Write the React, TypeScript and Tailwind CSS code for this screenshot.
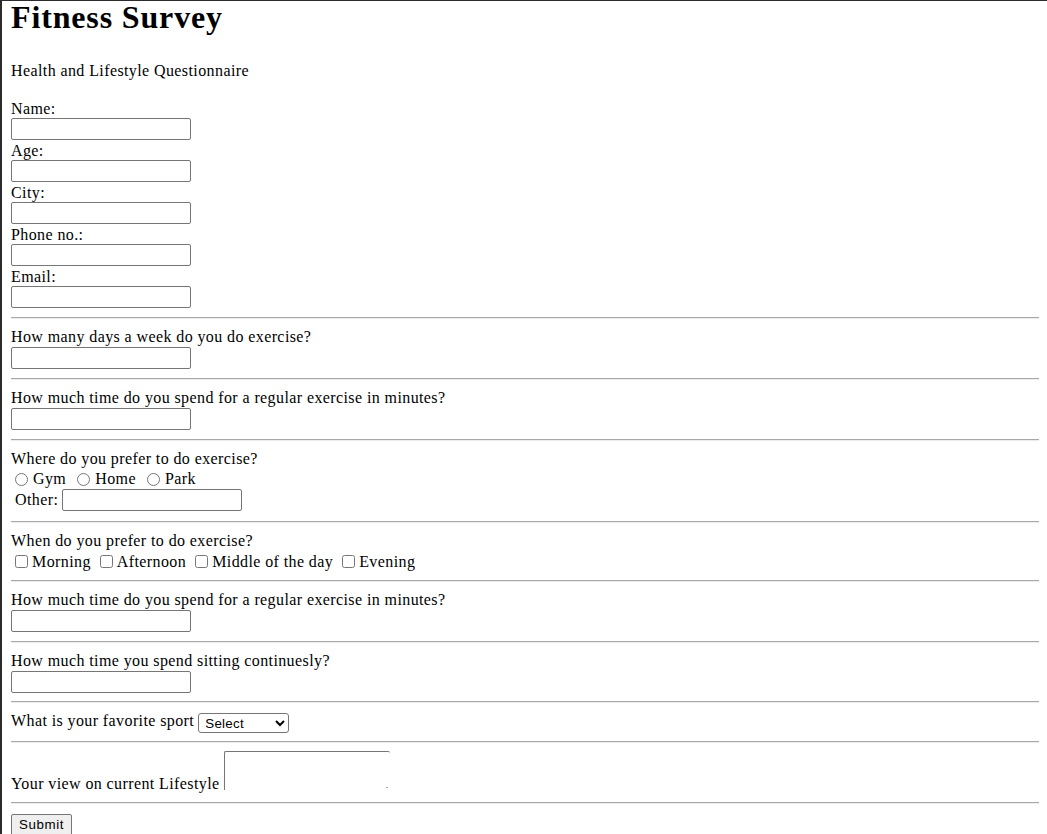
import React from "react";

const fields = ["Name:", "Age:", "City:", "Phone no.:", "Email:"];
const places = ["Gym", "Home", "Park"];
const times = ["Morning", "Afternoon", "Middle of the day", "Evening"];

const inputCls =
  "block w-[180px] h-[22px] border border-[#767676] rounded-[2px] bg-white px-[2px] text-[13.33px] font-['Liberation_Sans',Arial,sans-serif] outline-none";

// Chrome style inset horizontal rule
const Rule = () => (
  <div className="h-[2px] border-t border-b border-t-[#a8a8a8] border-b-[#ececec]" />
);

const Question = ({ text, gap }: { text: string; gap: string }) => (
  <div className={`pt-[8px] ${gap}`}>
    <div className="h-[20px] leading-[19px]">{text}</div>
    <input type="text" className={inputCls} />
  </div>
);

const App = () => {
  return (
    <div className="w-full h-[834px] overflow-hidden bg-white text-black border-t border-l-2 border-[#2b2b2b] pl-[9px] pr-[8px] font-['Liberation_Serif','Times_New_Roman',serif] text-[16px] tracking-[0.4px]">
      <h1 className="h-[33px] leading-[33px] text-[32px] font-bold tracking-[0.85px]">Fitness Survey</h1>
      <p className="mt-[27px] h-[20px] leading-[20px]">Health and Lifestyle Questionnaire</p>

      <form onSubmit={(e) => e.preventDefault()}>
        {/* Personal details */}
        <div className="mt-[18px] pb-[8px]">
          {fields.map((f) => (
            <div key={f} className="mb-[1px]">
              <label className="block h-[19px] leading-[19px]">{f}</label>
              <input type="text" className={inputCls} />
            </div>
          ))}
        </div>

        <Rule />
        <Question text="How many days a week do you do exercise?" gap="pb-[9px]" />
        <Rule />
        <Question text="How much time do you spend for a regular exercise in minutes?" gap="pb-[9px]" />
        <Rule />

        {/* Where */}
        <div className="pt-[8px] pb-[10px]">
          <div className="h-[20px] leading-[19px]">Where do you prefer to do exercise?</div>
          <div className="h-[20px] flex items-center pl-[4px]">
            {places.map((p) => (
              <label key={p} className="flex items-center">
                <input type="radio" name="place" className="w-[13px] h-[13px] mr-[5px]" />
                <span className="leading-[18px] mr-[11px]">{p}</span>
              </label>
            ))}
          </div>
          <div className="h-[22px] flex items-center pl-[4px] gap-[4px]">
            <span className="leading-[18px]">Other:</span>
            <input type="text" className={inputCls} />
          </div>
        </div>

        <Rule />

        {/* When */}
        <div className="pt-[8px] pb-[8px]">
          <div className="h-[20px] leading-[19px]">When do you prefer to do exercise?</div>
          <div className="h-[21px] flex items-center pl-[4px]">
            {times.map((t) => (
              <label key={t} className="flex items-center">
                <input type="checkbox" className="w-[13px] h-[13px] mr-[4px]" />
                <span className="leading-[18px] mr-[9px]">{t}</span>
              </label>
            ))}
          </div>
        </div>

        <Rule />
        <Question text="How much time do you spend for a regular exercise in minutes?" gap="pb-[9px]" />
        <Rule />
        <Question text="How much time you spend sitting continuesly?" gap="pb-[8px]" />
        <Rule />

        {/* Sport */}
        <div className="pt-[8px] pb-[8px]">
          <div className="h-[22px] flex items-start gap-[4px]">
            <span className="leading-[19px]">What is your favorite sport</span>
            <select
              defaultValue="select"
              className="mt-[2px] w-[91px] h-[20px] border border-[#767676] rounded-[3px] bg-white pl-[2px] text-[13.33px] tracking-[0.3px] font-['Liberation_Sans',Arial,sans-serif]"
            >
              <option value="select">Select</option>
              <option value="football">Football</option>
              <option value="cricket">Cricket</option>
              <option value="tennis">Tennis</option>
            </select>
          </div>
        </div>

        <Rule />

        {/* Lifestyle view */}
        <div className="pt-[8px] pb-[8px]">
          <div className="h-[43px] flex items-start gap-[4px]">
            <span className="mt-[24px] leading-[18px]">Your view on current Lifestyle</span>
            <span className="relative block">
              <textarea className="block w-[166px] h-[39px] resize-none border-t border-l border-[#767676] rounded-t-[2px] bg-white outline-none" />
              <span className="absolute right-[2px] bottom-[2px] w-[2px] h-[1px] bg-[#a0a0a0]" />
            </span>
          </div>
        </div>

        <Rule />

        <div className="pt-[8px]">
          <button
            type="submit"
            className="h-[22px] px-[7px] border border-[#767676] rounded-[2px] bg-[#efefef] text-[13.33px] leading-[15px] tracking-[0.6px] font-['Liberation_Sans',Arial,sans-serif]"
          >
            Submit
          </button>
        </div>
      </form>
    </div>
  );
};

export default App;
